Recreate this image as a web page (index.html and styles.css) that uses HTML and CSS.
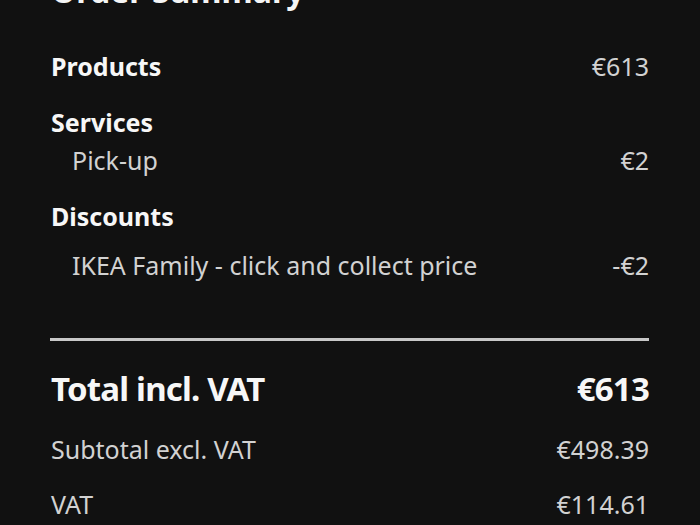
FILE: index.html
```html
<!DOCTYPE html>
<html lang="en">
<head>
<meta charset="utf-8">
<title>Order summary</title>
<link rel="stylesheet" href="styles.css">
</head>
<body>
<section class="summary">
  <h2 class="title">Order Summary</h2>

  <div class="row row-products">
    <span class="label">Products</span>
    <span class="amount">€613</span>
  </div>

  <div class="group group-services">
    <div class="label">Services</div>
    <div class="row sub row-pickup">
      <span>Pick-up</span>
      <span class="amount">€2</span>
    </div>
  </div>

  <div class="group group-discounts">
    <div class="label">Discounts</div>
    <div class="row sub row-family">
      <span>IKEA Family - click and collect price</span>
      <span class="amount">-€2</span>
    </div>
  </div>

  <hr class="divider">

  <div class="row total">
    <span>Total incl. VAT</span>
    <span>€613</span>
  </div>
  <div class="row muted row-subtotal">
    <span>Subtotal excl. VAT</span>
    <span>€498.39</span>
  </div>
  <div class="row muted row-vat">
    <span>VAT</span>
    <span>€114.61</span>
  </div>
</section>
</body>
</html>
```

FILE: styles.css
```css
* { box-sizing: border-box; }

html, body {
  margin: 0;
  padding: 0;
  background: #111111;
  overflow: hidden;
}

body {
  font-family: "Noto Sans", "Open Sans", sans-serif;
  color: #d2d2d2;
}

.summary {
  display: flex;
  flex-direction: column;
  padding: 0 51px;
}

.title {
  margin: -29px 0 0;
  font-size: 32px;
  line-height: 40px;
  font-weight: 700;
  color: #f5f5f5;
}

.row {
  display: flex;
  justify-content: space-between;
  align-items: baseline;
}

.label {
  font-size: 25px;
  line-height: 32px;
  font-weight: 700;
  color: #f7f7f7;
}

.amount {
  font-size: 25px;
  line-height: 32px;
  color: #d2d2d2;
}

.row-products {
  margin-top: 39px;
}

.group-services {
  margin-top: 24px;
}

.group-discounts {
  margin-top: 24px;
}

.sub {
  font-size: 25px;
  line-height: 32px;
  padding-left: 21px;
}

.row-pickup {
  margin-top: 6px;
}

.row-family {
  margin-top: 17px;
}

.divider {
  margin: 57px 0 0 -1px;
  border: 0;
  height: 3px;
  background: #c8c8c8;
}

.total {
  margin-top: 26px;
  font-size: 33px;
  line-height: 44px;
  font-weight: 700;
  letter-spacing: -0.8px;
  color: #f7f7f7;
}

.muted {
  font-size: 25px;
  line-height: 32px;
  color: #d2d2d2;
}

.row-subtotal {
  margin-top: 22px;
}

.row-vat {
  margin-top: 23px;
}
```
